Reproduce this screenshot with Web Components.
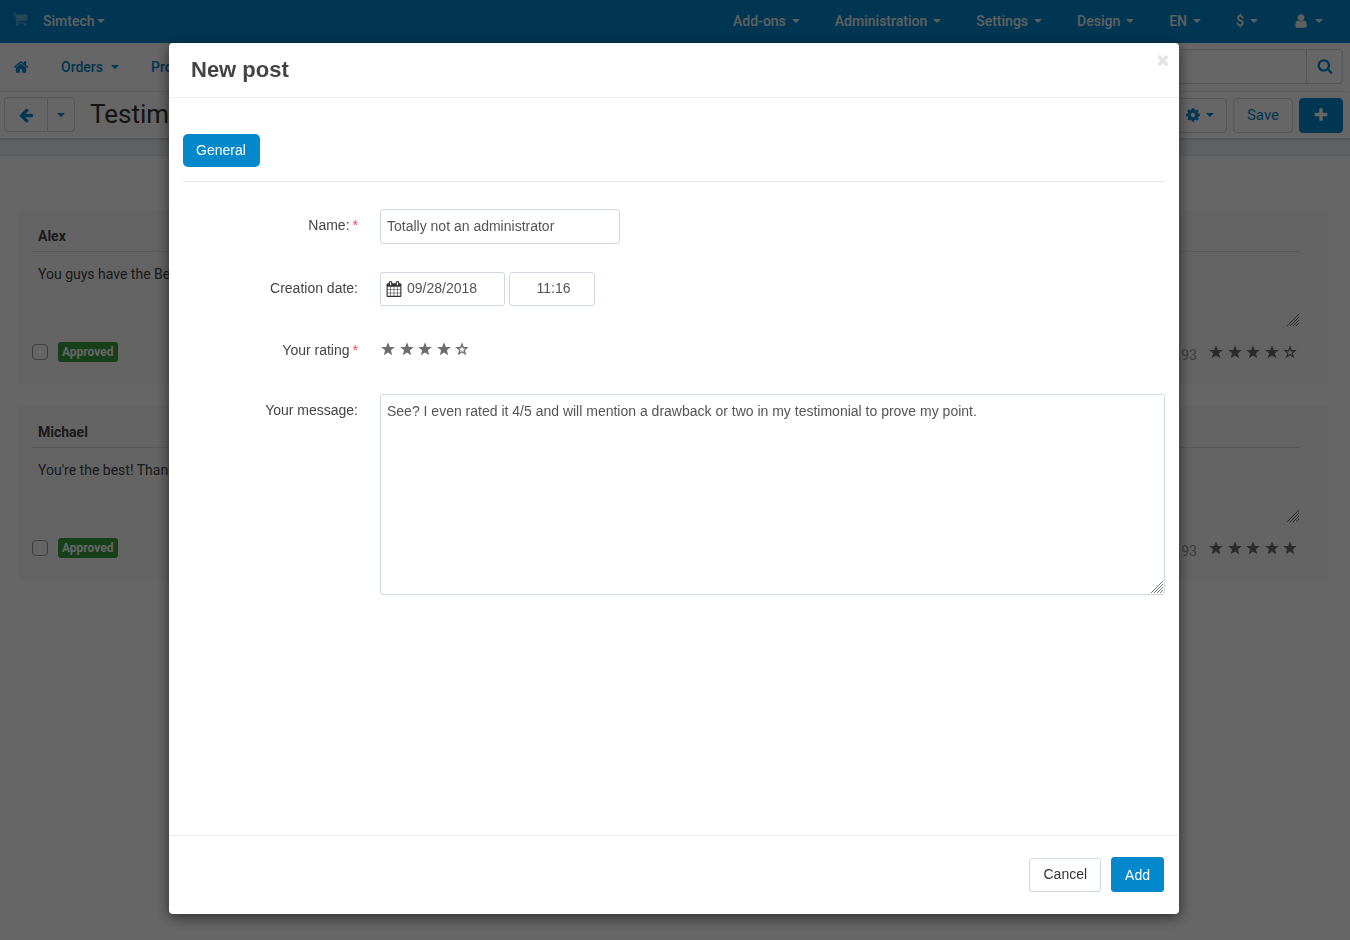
<!DOCTYPE html>
<html lang="en">
<head>
<meta charset="utf-8">
<meta name="viewport" content="width=device-width, initial-scale=1">
<title>Testimonials</title>
<style>
  :root {
    --blue: #0388cc;
    --line: #d0d7de;
    --rule: #e5e8ea;
  }
  body {
    margin: 0;
    min-height: 100vh;
    background: #fff;
    color: #444;
    font: 14px/20px Roboto, sans-serif;
  }
</style>
</head>
<body>
<top-bar></top-bar>
<main-nav></main-nav>
<title-bar>Testimonials</title-bar>
<post-list>
  <post-card author="Alex" rating="4" ip="10.0.0.93">You guys have the Best service!</post-card>
  <post-card author="Michael" rating="5" ip="10.0.0.93">You're the best! Thanks!</post-card>
</post-list>
<post-dialog></post-dialog>

<script>
const ICONS = {
  cart: 'M704 1536q0 52-38 90t-90 38-90-38-38-90 38-90 90-38 90 38 38 90zm896 0q0 52-38 90t-90 38-90-38-38-90 38-90 90-38 90 38 38 90zm128-1088v512q0 24-16.5 42.5t-40.5 21.5l-1044 122q13 60 13 70 0 16-24 64h920q26 0 45 19t19 45-19 45-45 19h-1024q-26 0-45-19t-19-45q0-11 8-31.5t16-36 21.5-40 15.5-29.5l-177-823h-204q-26 0-45-19t-19-45 19-45 45-19h256q16 0 28.5 6.5t19.5 15.5 13 24.5 8 26 5.5 29.5 4.5 26h1201q26 0 45 19t19 45z',
  home: 'M1472 992v480q0 26-19 45t-45 19h-384v-384h-256v384h-384q-26 0-45-19t-19-45v-480q0-1 .5-3t.5-3l575-474 575 474q1 2 1 6zm223-69l-62 74q-8 9-21 11h-3q-13 0-21-7l-692-577-692 577q-12 8-24 7-13-2-21-11l-62-74q-8-10-7-23.5t11-21.5l719-599q32-26 76-26t76 26l244 204v-195q0-14 9-23t23-9h192q14 0 23 9t9 23v408l219 182q10 8 11 21.5t-7 23.5z',
  search: 'M1216 832q0-185-131.5-316.5t-316.5-131.5-316.5 131.5-131.5 316.5 131.5 316.5 316.5 131.5 316.5-131.5 131.5-316.5zm512 832q0 52-38 90t-90 38q-54 0-90-38l-343-342q-179 124-399 124-143 0-273.5-55.5t-225-150-150-225-55.5-273.5 55.5-273.5 150-225 225-150 273.5-55.5 273.5 55.5 225 150 150 225 55.5 273.5q0 220-124 399l343 343q37 37 37 90z',
  back: 'M1664 896v128q0 53-32.5 90.5t-84.5 37.5h-704l293 294q38 36 38 90t-38 90l-75 76q-37 37-90 37-52 0-91-37l-651-652q-37-37-37-90 0-52 37-91l651-650q38-38 91-38 52 0 90 38l75 74q38 38 38 91t-38 91l-293 293h704q52 0 84.5 37.5t32.5 90.5z',
  gear: 'M1152 896q0-106-75-181t-181-75-181 75-75 181 75 181 181 75 181-75 75-181zm512-109v222q0 12-8 23t-20 13l-185 28q-19 54-39 91 35 50 107 138 10 12 10 25t-9 23q-27 37-99 108t-94 71q-12 0-26-9l-138-108q-44 23-91 38-16 136-29 186-7 28-36 28h-222q-14 0-24.5-8.5t-11.5-21.5l-28-184q-49-16-90-37l-141 107q-10 9-25 9-14 0-25-11-126-114-165-168-7-10-7-23 0-12 8-23 15-21 51-66.5t54-70.5q-27-50-41-99l-183-27q-13-2-21-12.5t-8-23.5v-222q0-12 8-23t19-13l186-28q14-46 39-92-40-57-107-138-10-12-10-24 0-10 9-23 26-36 98.5-107.5t94.5-71.5q13 0 26 10l138 107q44-23 91-38 16-136 29-186 7-28 36-28h222q14 0 24.5 8.5t11.5 21.5l28 184q49 16 90 37l142-107q9-9 24-9 13 0 25 10 129 119 165 170 7 8 7 22 0 12-8 23-15 21-51 66.5t-54 70.5q26 50 41 98l183 28q13 2 21 12.5t8 23.5z',
  user: 'M1536 1399q0 109-62.5 187t-150.5 78h-854q-88 0-150.5-78t-62.5-187q0-85 8.5-160.5t31.5-152 58.5-131 94-89 134.5-34.5q131 128 313 128t313-128q76 0 134.5 34.5t94 89 58.5 131 31.5 152 8.5 160.5zm-256-887q0 159-112.5 271.5t-271.5 112.5-271.5-112.5-112.5-271.5 112.5-271.5 271.5-112.5 271.5 112.5 112.5 271.5z',
  plus: 'M1600 736v192q0 40-28 68t-68 28h-416v416q0 40-28 68t-68 28h-192q-40 0-68-28t-28-68v-416h-416q-40 0-68-28t-28-68v-192q0-40 28-68t68-28h416v-416q0-40 28-68t68-28h192q40 0 68 28t28 68v416h416q40 0 68 28t28 68z',
  close: 'M1490 1322q0 40-28 68l-136 136q-28 28-68 28t-68-28l-294-294-294 294q-28 28-68 28t-68-28l-136-136q-28-28-28-68t28-68l294-294-294-294q-28-28-28-68t28-68l136-136q28-28 68-28t68 28l294 294 294-294q28-28 68-28t68 28l136 136q28 28 28 68t-28 68l-294 294 294 294q28 28 28 68z',
  calendar: 'M192 1664h288v-288h-288v288zm352 0h320v-288h-320v288zm-352-352h288v-320h-288v320zm352 0h320v-320h-320v320zm-352-384h288v-288h-288v288zm736 736h320v-288h-320v288zm-384-736h320v-288h-320v288zm768 736h288v-288h-288v288zm-384-352h320v-320h-320v320zm-352-864v-288q0-13-9.5-22.5t-22.5-9.5h-64q-13 0-22.5 9.5t-9.5 22.5v288q0 13 9.5 22.5t22.5 9.5h64q13 0 22.5-9.5t9.5-22.5zm736 864h288v-320h-288v320zm-384-384h320v-288h-320v288zm384 0h288v-288h-288v288zm32-480v-288q0-13-9.5-22.5t-22.5-9.5h-64q-13 0-22.5 9.5t-9.5 22.5v288q0 13 9.5 22.5t22.5 9.5h64q13 0 22.5-9.5t9.5-22.5zm384-64v1280q0 52-38 90t-90 38h-1408q-52 0-90-38t-38-90v-1280q0-52 38-90t90-38h128v-96q0-66 47-113t113-47h64q66 0 113 47t47 113v96h384v-96q0-66 47-113t113-47h64q66 0 113 47t47 113v96h128q52 0 90 38t38 90z'
};

/* Rules that every shadow root shares. */
const BASE = `
  * { box-sizing: border-box; }
  button, input, textarea { font: inherit; color: inherit; margin: 0; }
  button { cursor: pointer; padding: 0; background: none; border: 0; }
  a { color: inherit; text-decoration: none; }
`;

function define(name, markup, setup) {
  customElements.define(name, class extends HTMLElement {
    connectedCallback() {
      if (this.shadowRoot) return;
      const root = this.attachShadow({ mode: 'open' });
      const body = typeof markup === 'function' ? markup(this) : markup;
      root.innerHTML = body.replace('<style>', '<style>' + BASE);
      if (setup) setup(this, root);
    }
  });
}

define('ui-icon', el => `
  <style>
    :host { display: inline-flex; flex: none; width: 16px; height: 16px; }
    svg { width: 100%; height: 100%; fill: currentColor; }
  </style>
  <svg viewBox="${el.getAttribute('name') === 'calendar' ? '64 0 1664 1792' : '0 0 1792 1792'}" aria-hidden="true"><path d="${ICONS[el.getAttribute('name')]}"/></svg>`);

define('ui-caret', `
  <style>
    :host { display: inline-block; flex: none; border: 4px solid transparent; border-top-color: currentColor; border-bottom: 0; }
  </style>`);

/* Hatch in the lower right corner of a resizable text area. */
define('resize-grip', `
  <style>
    :host { display: block; width: 12px; height: 12px; pointer-events: none; }
    svg { display: block; }
  </style>
  <svg width="12" height="12" viewBox="0 0 12 12" stroke="#777" stroke-width="1" fill="none" aria-hidden="true">
    <path d="M0 12L12 0M3 12L12 3M6 12L12 6M9 12L12 9"/>
  </svg>`);

define('star-rating', el => {
  const value = Number(el.getAttribute('value'));
  const outer = '7,0.2 8.8,4.9 13.8,5.1 9.9,8.3 11.2,13.2 7,10.5 2.8,13.2 4.1,8.3 0.2,5.1 5.2,4.9';
  let stars = '';
  for (let i = 1; i <= 5; i++) {
    stars += `<button type="button" aria-label="${i} of 5"><svg width="14" height="14" viewBox="0 0 14 14"><path fill-rule="evenodd" d="M${outer.replace(/ /g, 'L')}Z${i > value ? 'M7 4.2L7.8 6.4 10.2 6.5 8.4 8 9 10.2 7 9 5 10.2 5.6 8 3.8 6.5 6.2 6.4Z' : ''}"/></svg></button>`;
  }
  return `
  <style>
    :host { display: flex; justify-content: space-between; width: 88px; color: #6e6e6e; }
    button { display: flex; }
    svg { fill: currentColor; }
  </style>${stars}`;
});

define('nav-item', `
  <style>
    :host { display: block; font-weight: 500; }
    a { display: flex; align-items: center; gap: 6px; height: 20px; }
    :host([tight]) a { gap: 2px; }
    :host([roomy]) a { gap: 8px; }
  </style>
  <a href="#"><slot></slot><ui-caret></ui-caret></a>`);

define('top-bar', `
  <style>
    :host { display: block; background: var(--blue); color: #f0f0f0; }
    nav { display: flex; align-items: center; gap: 35px; height: 43px; padding: 0 27px 2px 12px; }
    .store { display: flex; align-items: center; gap: 15px; margin-right: auto; }
    .cart { display: flex; height: 20px; opacity: .4; }
  </style>
  <nav aria-label="Store">
    <div class="store">
      <a class="cart" href="#" aria-label="Storefront"><ui-icon name="cart"></ui-icon></a>
      <nav-item tight>Simtech</nav-item>
    </div>
    <nav-item>Add-ons</nav-item>
    <nav-item>Administration</nav-item>
    <nav-item>Settings</nav-item>
    <nav-item>Design</nav-item>
    <nav-item>EN</nav-item>
    <nav-item>$</nav-item>
    <nav-item><ui-icon name="user"></ui-icon></nav-item>
  </nav>`);

define('main-nav', `
  <style>
    :host { display: block; color: var(--blue); border-bottom: 1px solid #eee; }
    nav { display: flex; align-items: center; gap: 32px; height: 48px; padding: 0 7px 0 13px; }
    form { display: flex; width: 280px; height: 35px; margin: 0 0 2px auto; border: 1px solid var(--line); border-radius: 4px; }
    input { flex: 1; min-width: 0; border: 0; background: none; padding: 0 8px; }
    button { display: flex; align-items: center; justify-content: center; width: 36px; border-left: 1px solid var(--line); }
    .home { display: flex; }
  </style>
  <nav aria-label="Main">
    <a class="home" href="#" aria-label="Home"><ui-icon name="home"></ui-icon></a>
    <nav-item roomy>Orders</nav-item>
    <nav-item roomy>Pro</nav-item>
    <form role="search">
      <input type="text" aria-label="Search">
      <button type="button" aria-label="Find"><ui-icon name="search"></ui-icon></button>
    </form>
  </nav>`);

define('title-bar', `
  <style>
    :host { display: block; background: #ecf0f4; color: #333; }
    header { display: flex; align-items: center; gap: 6px; height: 46px; padding: 0 7px 0 4px; background: #fff; box-shadow: 0 1px 3px #0003; }
    h1 { flex: 1; margin: 0; padding: 0 0 2px 9px; font-size: 26px; line-height: 32px; font-weight: 400; }
    .group { display: flex; padding-bottom: 1px; }
    button { display: flex; align-items: center; justify-content: center; gap: 6px; height: 35px; border: 1px solid var(--line); border-radius: 4px; color: var(--blue); }
    .back { width: 44px; border-radius: 4px 0 0 4px; }
    .more { width: 27px; border-radius: 0 4px 4px 0; border-left: 0; }
    .gear { width: 56px; gap: 5px; padding-left: 1px; }
    .save { width: 60px; font-size: 15px; }
    .add { width: 44px; background: var(--blue); border-color: var(--blue); color: #fff; }
    .band { height: 18px; border-bottom: 1px solid #e4e9ee; }
  </style>
  <header>
    <div class="group">
      <button class="back" type="button" aria-label="Back"><ui-icon name="back"></ui-icon></button>
      <button class="more" type="button" aria-label="History"><ui-caret></ui-caret></button>
    </div>
    <h1><slot></slot></h1>
    <button class="gear" type="button" aria-label="Tools"><ui-icon name="gear"></ui-icon><ui-caret></ui-caret></button>
    <button class="save" type="button">Save</button>
    <button class="add" type="button" aria-label="New"><ui-icon name="plus"></ui-icon></button>
  </header>
  <div class="band"></div>`);

define('post-list', `
  <style>
    :host { display: grid; gap: 22px; padding: 54px 22px 20px 19px; }
  </style>
  <slot></slot>`);

define('post-card', el => `
  <style>
    :host { display: block; padding: 10px 29px 20px 13px; background: #f9f9f9; }
    .name { display: block; width: 100%; height: 32px; padding: 0 6px; border: 0; border-bottom: 1px solid #ddd; background: none; font-weight: 700; }
    .message { position: relative; }
    textarea { display: block; width: 100%; height: 75px; padding: 12px 6px; border: 0; background: none; resize: none; overflow: hidden; }
    resize-grip { position: absolute; right: 0; bottom: 1px; }
    .foot { display: flex; align-items: center; gap: 10px; padding-top: 12px; height: 37px; }
    input[type=checkbox] { appearance: none; width: 16px; height: 16px; border: 1px solid #999; border-radius: 4px; background: #fdfdfd; }
    .badge { padding: 0 4px; border-radius: 3px; background: #3a9d3f; color: #fff; font-size: 12px; font-weight: 700; }
    .ip { margin: 6px 2px 0 auto; color: #999; }
    star-rating { margin-right: 2px; }
  </style>
  <input class="name" type="text" aria-label="Name" value="${el.getAttribute('author')}">
  <div class="message">
    <textarea aria-label="Message"></textarea>
    <resize-grip></resize-grip>
  </div>
  <div class="foot">
    <input type="checkbox" aria-label="Select post">
    <span class="badge">Approved</span>
    <span class="ip">${el.getAttribute('ip')}</span>
    <star-rating value="${el.getAttribute('rating')}"></star-rating>
  </div>`, (el, root) => {
    root.querySelector('textarea').value = el.textContent.trim();
  });

define('form-field', `
  <style>
    :host { display: grid; grid-template-columns: 175px minmax(0, 1fr); column-gap: 22px; min-height: 32px; }
    .label { text-align: right; padding-top: 6px; }
    .control { display: flex; align-items: flex-start; gap: 4px; }
  </style>
  <div class="label"><slot name="label"></slot></div>
  <div class="control"><slot></slot></div>`);

define('post-dialog', `
  <style>
    :host { position: fixed; inset: 0; display: flex; padding: 43px 171px 26px 169px; background: #0009; font-family: "Liberation Sans", Arial, sans-serif; }
    section { flex: 1; min-width: 0; display: flex; flex-direction: column; background: #fff; border-radius: 4px; box-shadow: 0 3px 14px #0009; }
    header { display: flex; align-items: flex-start; justify-content: space-between; height: 55px; padding: 9px 8px 0 22px; border-bottom: 1px solid #eee; }
    h2 { margin: 0; font-size: 22px; line-height: 36px; color: #444; }
    .close { display: flex; color: #e2e2e2; }
    form { flex: 1; display: flex; flex-direction: column; min-height: 0; }
    .body { flex: 1; padding: 36px 14px 0; overflow: auto; }
    .tabs { padding-bottom: 14px; border-bottom: 1px solid var(--rule); }
    .tab { display: block; height: 33px; padding: 0 14px 2px 13px; border-radius: 5px; background: var(--blue); color: #fff; }
    .fields { display: grid; gap: 28px; padding-top: 27px; }
    input, textarea { border: 1px solid var(--line); border-radius: 3px; background: #fff; color: #555; }
    label { color: #444; }
    label span { color: #f45; margin-left: 3px; }
    .name { width: 240px; height: 35px; padding: 0 6px 2px; }
    .date { position: relative; }
    .date ui-icon { position: absolute; left: 6px; top: 9px; color: #333; }
    .date input { display: block; width: 125px; height: 34px; padding: 0 6px 2px 26px; }
    .time { width: 86px; height: 34px; padding: 0 0 2px 3px; text-align: center; }
    star-rating { margin: 8px 1px 0; }
    .message { position: relative; flex: 1; }
    textarea { display: block; width: 100%; height: 201px; padding: 6px; resize: none; }
    .message resize-grip { position: absolute; right: 2px; bottom: 2px; }
    footer { display: flex; justify-content: flex-end; align-items: flex-end; gap: 10px; padding: 21px 15px 22px; border-top: 1px solid #eee; }
    footer button { height: 34px; border: 1px solid var(--line); border-radius: 3px; padding: 0 13px 2px; color: #333; }
    footer .add { height: 35px; padding-bottom: 0; background: var(--blue); border-color: var(--blue); color: #fff; }
  </style>
  <section role="dialog" aria-modal="true" aria-labelledby="title">
    <header>
      <h2 id="title">New post</h2>
      <button class="close" type="button" aria-label="Close"><ui-icon name="close"></ui-icon></button>
    </header>
    <form>
      <div class="body">
        <div class="tabs"><button class="tab" type="button">General</button></div>
        <div class="fields">
          <form-field>
            <label slot="label" for="name">Name:<span>*</span></label>
            <input class="name" id="name" type="text" value="Totally not an administrator">
          </form-field>
          <form-field>
            <label slot="label" for="date">Creation date:</label>
            <div class="date"><ui-icon name="calendar"></ui-icon><input id="date" type="text" value="09/28/2018"></div>
            <input class="time" type="text" aria-label="Creation time" value="11:16">
          </form-field>
          <form-field>
            <label slot="label" id="rating">Your rating<span>*</span></label>
            <star-rating value="4" role="group" aria-labelledby="rating"></star-rating>
          </form-field>
          <form-field>
            <label slot="label" for="message">Your message:</label>
            <div class="message">
              <textarea id="message">See? I even rated it 4/5 and will mention a drawback or two in my testimonial to prove my point.</textarea>
              <resize-grip></resize-grip>
            </div>
          </form-field>
        </div>
      </div>
      <footer>
        <button type="button">Cancel</button>
        <button class="add" type="button">Add</button>
      </footer>
    </form>
  </section>`);
</script>
</body>
</html>
